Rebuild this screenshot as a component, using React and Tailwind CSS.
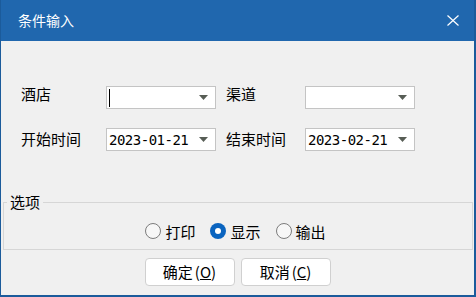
import React from 'react'

const cjk = { fontFamily: '"Noto Sans CJK SC", "Liberation Sans", sans-serif' }

function Caret() {
  return (
    <svg width="9" height="5" viewBox="0 0 9 5" className="shrink-0">
      <path d="M0 0H9L4.5 5Z" fill="#575d55" />
    </svg>
  )
}

function Combo({ value, focused }) {
  return (
    <div className="flex h-[23px] w-[110px] items-center border border-[#c4c4c4] bg-white pl-[2px] pr-[7px]">
      {focused && <div className="h-[18px] w-px bg-black" />}
      <span className="flex-1 font-['DejaVu_Sans_Mono',monospace] text-[14px] leading-none tracking-[-0.5px] text-black">{value}</span>
      <Caret />
    </div>
  )
}

function Radio({ label, checked }) {
  return (
    <label className="flex items-center gap-[4px]">
      {checked ? (
        <span className="flex h-[16px] w-[16px] items-center justify-center rounded-full bg-[#0a64bf]">
          <span className="h-[6px] w-[6px] rounded-full bg-white" />
        </span>
      ) : (
        <span className="h-[16px] w-[16px] rounded-full border border-[#7c7c7c] bg-[#f7f7f7]" />
      )}
      <span className="text-[15px] leading-none">{label}</span>
    </label>
  )
}

function Button({ label, hotkey }) {
  return (
    <button
      type="button"
      className="flex h-[28px] w-[90px] items-center justify-center rounded-[4px] border border-[#d0d0d0] bg-white text-[15px] text-black"
    >
      {label}
      <span className="ml-[2px]">(<span className="underline">{hotkey}</span>)</span>
    </button>
  )
}

export default function App() {
  return (
    <div style={cjk} className="flex h-[297px] w-[476px] flex-col border-b-2 border-l border-r-2 border-[#1b5b9b] bg-[#f0f0f0] text-black">
      <div className="flex h-[41px] shrink-0 items-center justify-between bg-[#2067ae] pl-[17px] pr-[15px] text-white">
        <span className="text-[14px]">条件输入</span>
        <svg width="12" height="11" viewBox="0 0 12 11">
          <path d="M0.5 0.5L11.5 10.5M11.5 0.5L0.5 10.5" stroke="#fff" strokeWidth="1.2" />
        </svg>
      </div>

      <div className="pl-[20px] pt-[45px]">
        <div className="flex h-[23px] items-center">
          <span className="mb-[6px] w-[85px] text-[15px]">酒店</span>
          <Combo value="" focused />
          <span className="mb-[6px] ml-[10px] w-[79px] text-[15px]">渠道</span>
          <Combo value="" />
        </div>
        <div className="mt-[19px] flex h-[23px] items-center">
          <span className="w-[85px] text-[15px]">开始时间</span>
          <Combo value="2023-01-21" />
          <span className="ml-[10px] w-[79px] text-[15px]">结束时间</span>
          <Combo value="2023-02-21" />
        </div>
      </div>

      <fieldset className="ml-[2px] mt-[41px] w-[470px] border border-[#d6d6d6] pb-[10px] pl-[3px]">
        <legend className="px-[3px] text-[15px] leading-[20px]">选项</legend>
        <div className="flex items-center justify-center gap-[15px] pr-[8px] pt-[11px]">
          <Radio label="打印" />
          <Radio label="显示" checked />
          <Radio label="输出" />
        </div>
      </fieldset>

      <div className="mt-[8px] flex justify-center gap-[6px]">
        <Button label="确定" hotkey="O" />
        <Button label="取消" hotkey="C" />
      </div>
    </div>
  )
}
